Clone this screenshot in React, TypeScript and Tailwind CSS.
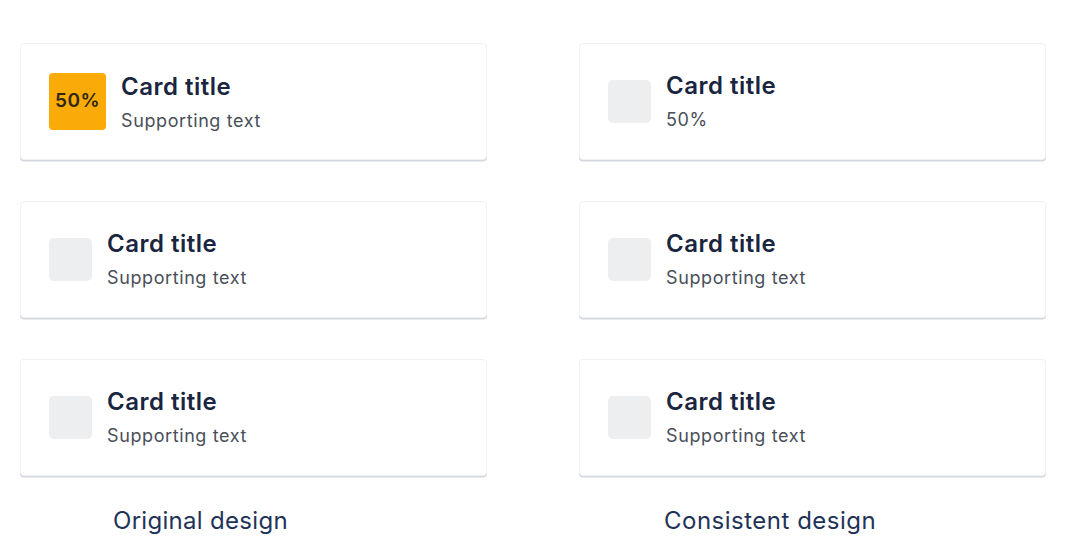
import React from "react";

const font = { fontFamily: "Inter, 'Noto Sans', sans-serif" };

function Card({ icon, sub }: { icon: "orange" | "gray"; sub: string }) {
  return (
    <div className="h-[117px] w-full rounded-[4px] border border-[#f1f2f4] bg-white shadow-[0_1.5px_0_0_#d3d8de] flex items-center pl-[28px]">
      {icon === "orange" ? (
        <div className="flex h-[57px] w-[57px] items-center justify-center rounded-[4px] bg-[#fbab07] text-[19px] font-semibold tracking-[0.4px] text-[#2e2716]">
          50%
        </div>
      ) : (
        <div className="h-[43px] w-[43px] rounded-[5px] bg-[#eceef0]" />
      )}
      <div className={icon === "orange" ? "ml-[15px] mt-[1px]" : "ml-[15px]"}>
        <div className="text-[24px] font-semibold leading-[28px] tracking-[0.5px] text-[#1a2540]">Card title</div>
        <div className="mt-[9px] text-[18px] leading-[22px] tracking-[0.6px] text-[#4a4f59]">{sub}</div>
      </div>
    </div>
  );
}

export default function App() {
  return (
    <div className="h-[556px] w-[1080px] bg-white" style={font}>
      <div className="flex gap-[92px] pl-[20px] pt-[43px]">
        <div className="flex w-[467px] flex-col">
          <div className="flex flex-col gap-[41px]">
            <Card icon="orange" sub="Supporting text" />
            <Card icon="gray" sub="Supporting text" />
            <Card icon="gray" sub="Supporting text" />
          </div>
          <div className="mt-[30px] pl-[93px] text-[24px] leading-[30px] tracking-[0.3px] text-[#1f3358]">Original design</div>
        </div>
        <div className="flex w-[467px] flex-col">
          <div className="flex flex-col gap-[41px]">
            <Card icon="gray" sub="50%" />
            <Card icon="gray" sub="Supporting text" />
            <Card icon="gray" sub="Supporting text" />
          </div>
          <div className="mt-[30px] pl-[85px] text-[24px] leading-[30px] tracking-[0.5px] text-[#1f3358]">Consistent design</div>
        </div>
      </div>
    </div>
  );
}
